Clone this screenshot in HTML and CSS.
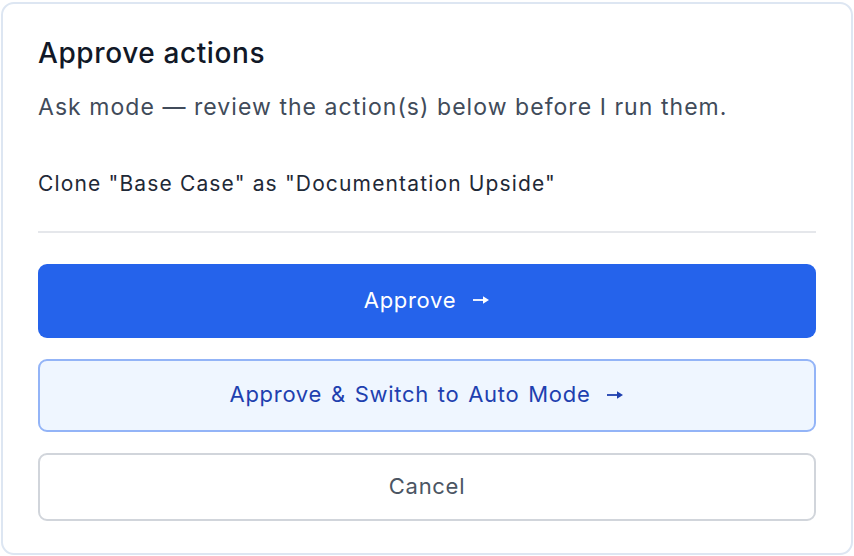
FILE: index.html
```html
<!DOCTYPE html>
<html lang="en">
<head>
<meta charset="utf-8">
<title>Approve actions</title>
<link rel="stylesheet" href="styles.css">
</head>
<body>
<div class="card">
  <h1 class="title">Approve actions</h1>
  <p class="subtitle">Ask mode — review the action(s) below before I run them.</p>
  <p class="action">Clone "Base Case" as "Documentation Upside"</p>
  <hr class="divider">
  <div class="buttons">
    <button class="btn btn-primary">Approve<svg class="arrow" viewBox="0 0 18 12" aria-hidden="true"><path d="M1 6H12" stroke="currentColor" stroke-width="1.8" fill="none"/><path d="M11 2.2L17 6L11 9.8Z" fill="currentColor"/></svg></button>
    <button class="btn btn-secondary">Approve &amp; Switch to Auto Mode<svg class="arrow" viewBox="0 0 18 12" aria-hidden="true"><path d="M1 6H12" stroke="currentColor" stroke-width="1.8" fill="none"/><path d="M11 2.2L17 6L11 9.8Z" fill="currentColor"/></svg></button>
    <button class="btn btn-cancel">Cancel</button>
  </div>
</div>
</body>
</html>
```

FILE: styles.css
```css
html, body {
  margin: 0;
  padding: 0;
  background: #ffffff;
}
body {
  font-family: "Inter", "Noto Sans", sans-serif;
  padding: 2px 1px 1px 1px;
}
.card {
  box-sizing: border-box;
  height: 553px;
  border: 2px solid #dde6f2;
  border-radius: 13px;
  background: #ffffff;
  padding: 31px 35px 0 35px;
}
.title {
  margin: 0;
  font-size: 28px;
  line-height: 36px;
  font-weight: 500;
  letter-spacing: 0.6px;
  color: #111827;
}
.subtitle {
  margin: 21px 0 0 0;
  font-size: 23px;
  line-height: 30px;
  letter-spacing: 1.05px;
  color: #414b5a;
}
.action {
  margin: 48px 0 0 0;
  font-size: 21px;
  line-height: 28px;
  letter-spacing: 1.15px;
  color: #1f2937;
}
.divider {
  margin: 33px 0 0 0;
  border: 0;
  height: 2px;
  background: #e5e7eb;
}
.buttons {
  margin-top: 31px;
  display: flex;
  flex-direction: column;
  gap: 21px;
}
.btn {
  box-sizing: border-box;
  width: 100%;
  padding: 0 0 3px 0;
  font-family: inherit;
  font-size: 22px;
  letter-spacing: 0.7px;
  word-spacing: 2px;
  border-radius: 9px;
  cursor: pointer;
  display: flex;
  align-items: center;
  justify-content: center;
}
.arrow {
  width: 18px;
  height: 12px;
  margin-left: 16px;
  margin-top: 1px;
  flex: none;
}
.btn-primary {
  height: 74px;
  background: #2563eb;
  border: 0;
  color: #ffffff;
}
.btn-secondary {
  height: 73px;
  background: #eff6ff;
  border: 2px solid #93b4f7;
  color: #1e40af;
}
.btn-cancel {
  height: 68px;
  background: #ffffff;
  border: 2px solid #d1d5db;
  color: #4b5563;
}
```
